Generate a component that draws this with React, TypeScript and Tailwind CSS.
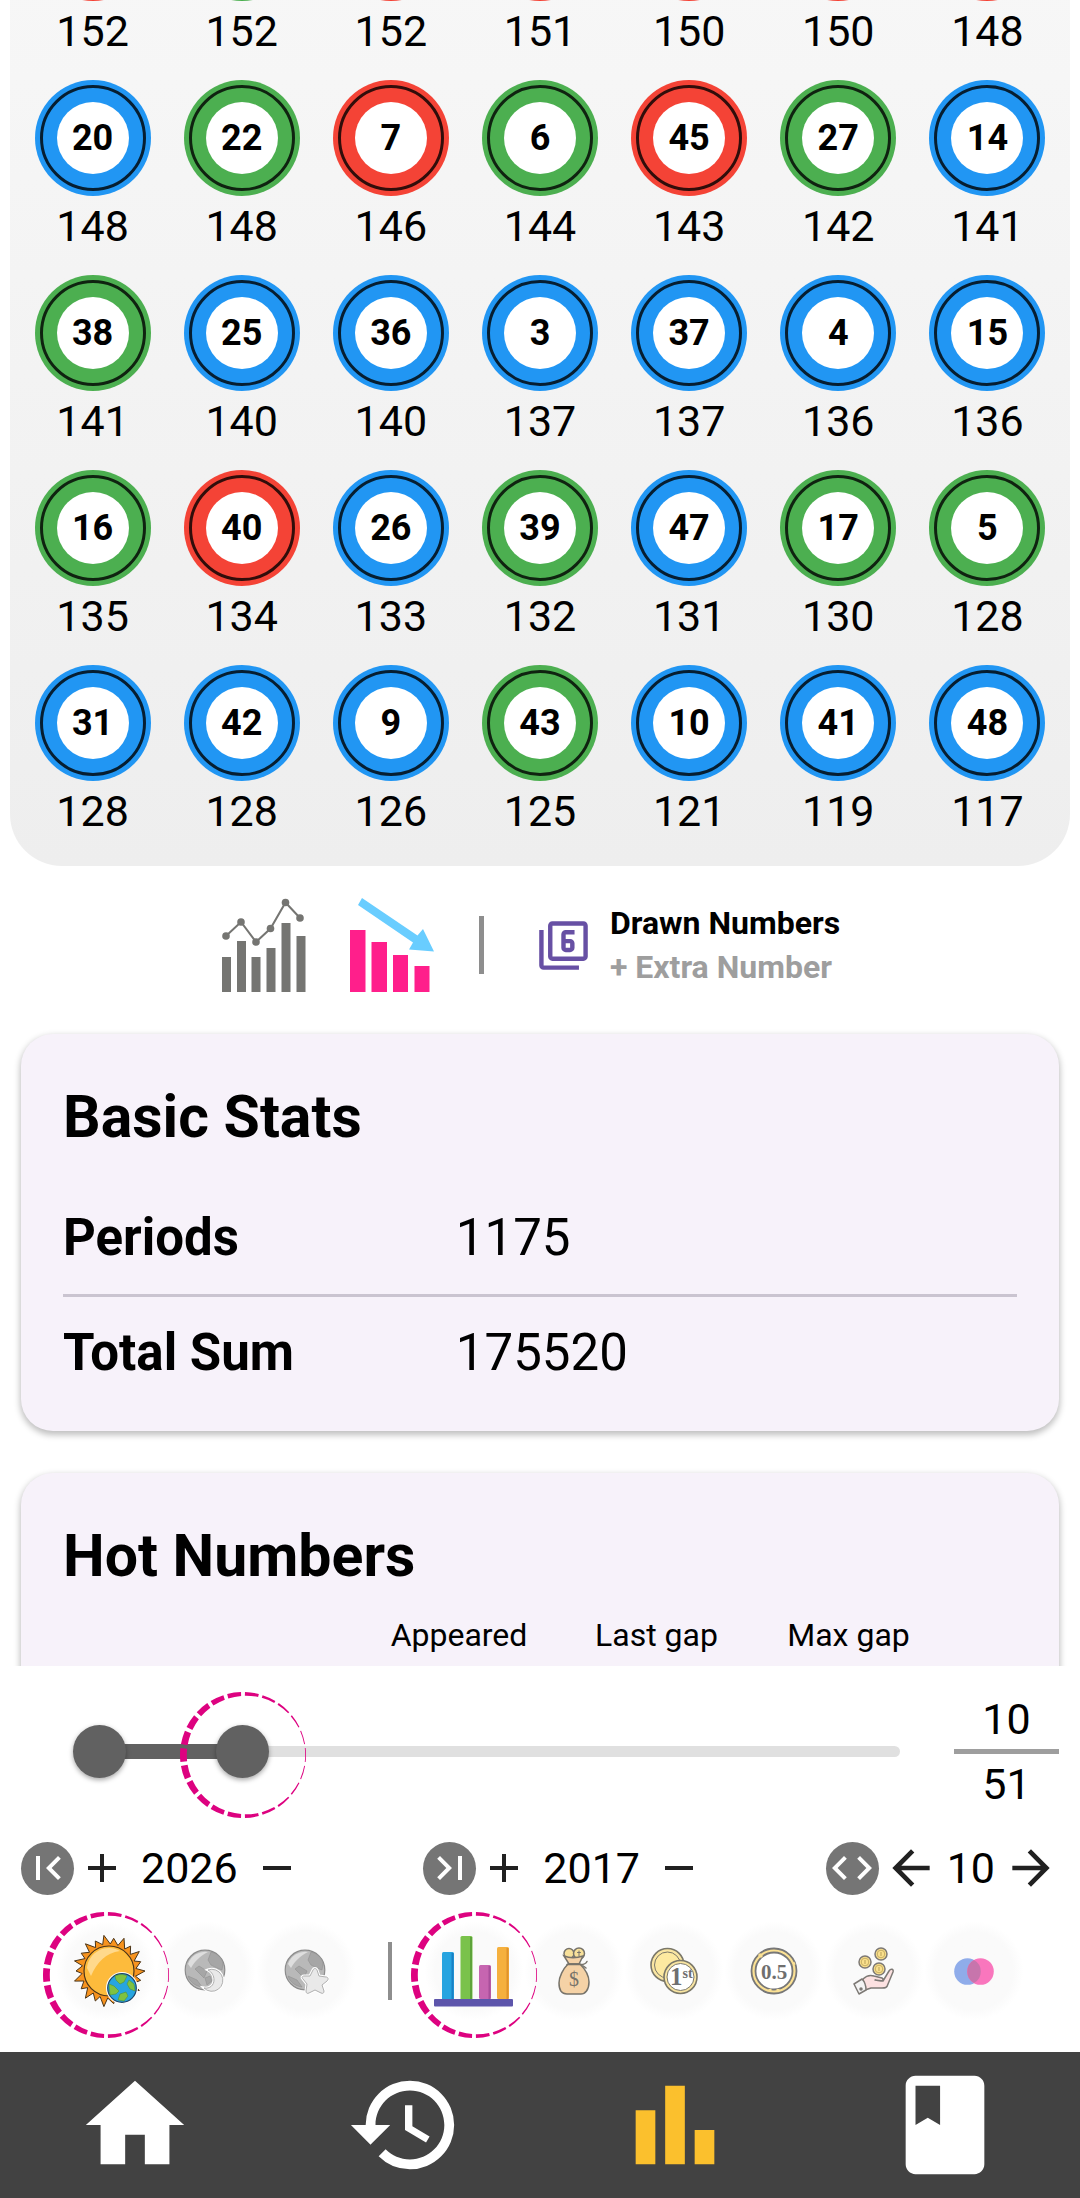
import { useState } from 'react'
import type { ReactNode } from 'react'
import {
  MdAdd,
  MdArrowBack,
  MdArrowForward,
  MdBook,
  MdCode,
  MdFilter6,
  MdFirstPage,
  MdLastPage,
  MdRemove,
} from 'react-icons/md'

type BallColor = 'red' | 'green' | 'blue'
type Ball = [number | null, BallColor, number]

const ballColors: Record<BallColor, string> = {
  red: 'bg-[#f44336]',
  green: 'bg-[#4caf50]',
  blue: 'bg-[#2196f3]',
}

const balls: Ball[] = [
  [null, 'red', 152], [null, 'green', 152], [null, 'red', 152], [null, 'red', 151], [null, 'red', 150], [null, 'red', 150], [null, 'red', 148],
  [20, 'blue', 148], [22, 'green', 148], [7, 'red', 146], [6, 'green', 144], [45, 'red', 143], [27, 'green', 142], [14, 'blue', 141],
  [38, 'green', 141], [25, 'blue', 140], [36, 'blue', 140], [3, 'blue', 137], [37, 'blue', 137], [4, 'blue', 136], [15, 'blue', 136],
  [16, 'green', 135], [40, 'red', 134], [26, 'blue', 133], [39, 'green', 132], [47, 'blue', 131], [17, 'green', 130], [5, 'green', 128],
  [31, 'blue', 128], [42, 'blue', 128], [9, 'blue', 126], [43, 'green', 125], [10, 'blue', 121], [41, 'blue', 119], [48, 'blue', 117],
]

function NumberBall({ value, color }: { value: number | null; color: BallColor }) {
  return (
    <div className={`size-[116px] rounded-full p-[5px] ${ballColors[color]}`}>
      <div className="flex size-full items-center justify-center rounded-full border-[3px] border-black/80">
        <span className="flex size-[72px] items-center justify-center rounded-full bg-white text-[36px] leading-none font-bold">
          {value}
        </span>
      </div>
    </div>
  )
}

function FrequencyGrid() {
  return (
    <section className="mx-[10px] -mt-[115px] grid grid-cols-7 rounded-b-[52px] bg-linear-to-b from-[#f8f8f8] to-[#eeeeee] px-2 pb-[6px]">
      {balls.map(([value, color, count], i) => (
        <div key={i} className="flex h-[195px] flex-col items-center gap-[6px]">
          <NumberBall value={value} color={color} />
          <span className="text-[43px] leading-[48px]">{count}</span>
        </div>
      ))}
    </section>
  )
}

const trendPoints = [[4, 38], [19, 24], [34, 44], [48.5, 30.5], [63.5, 4.5], [78, 20]]
const trendBars = [[0, 59], [15, 43], [29.5, 59], [44.5, 50], [59.5, 25], [74.5, 38]]

function TrendIcon() {
  return (
    <svg className="h-[94px] w-[84px]" viewBox="0 0 84 94" fill="#757572">
      {trendBars.map(([x, y]) => (
        <rect key={x} x={x} y={y} width="9" height={94 - y} />
      ))}
      <polyline points={trendPoints.join(' ')} fill="none" stroke="#757572" strokeWidth="2" />
      {trendPoints.map(([x, y]) => (
        <circle key={x} cx={x} cy={y} r="3.8" />
      ))}
    </svg>
  )
}

function DecreaseIcon() {
  return (
    <svg className="h-[94px] w-[84px]" viewBox="0 0 84 94">
      <path fill="#ff1f8b" d="M0 32h15.500v62H0zM21.500 44h15.500v50h-15.500zM43 57h15v37h-15zM64.500 68h15v26h-15z" />
      <path fill="#69cdff" d="M12 0 67.500 37.500 73 31 84 53.500 59 51.500 63 44.500 8 7z" />
    </svg>
  )
}

function ChartToolbar() {
  return (
    <div className="flex h-[147px] items-center justify-center pr-[18px] pt-[11px]">
      <button type="button" aria-label="Chart">
        <TrendIcon />
      </button>
      <button type="button" aria-label="Sort descending" className="ml-11">
        <DecreaseIcon />
      </button>
      <div className="ml-[45px] h-[58px] w-[5px] bg-[#8e8e8e]" />
      <button type="button" className="ml-[53px] flex items-center gap-5 text-left">
        <MdFilter6 className="size-[53px] text-[#6750a4]" />
        <span className="flex flex-col text-[32px] leading-[44px] font-bold">
          <span>Drawn Numbers</span>
          <span className="text-[#9e9e9e]">+ Extra Number</span>
        </span>
      </button>
    </div>
  )
}

function Card({ title, children }: { title: string; children: ReactNode }) {
  return (
    <section className="m-[21px] rounded-[32px] bg-[#f7f2fa] px-[42px] pt-[50px] pb-[22px] shadow-[0_3px_6px_1px_rgba(0,0,0,0.25)]">
      <h2 className="text-[59px] leading-[66px] font-bold">{title}</h2>
      {children}
    </section>
  )
}

// dashes are thick on the left side and fade to a hairline on the right
const ringDashes = Array.from({ length: 22 }, (_, i) => {
  const middle = Math.PI + (i * 2 * Math.PI) / 22
  const half = (Math.PI / 22) * 0.78
  const width = (angle: number) => 0.8 + ((1 - Math.cos(angle)) / 2) * 6
  const point = (angle: number, inset: number) => {
    const r = 63 - inset
    return `${(63 + r * Math.cos(angle)).toFixed(2)} ${(63 + r * Math.sin(angle)).toFixed(2)}`
  }
  const a = middle - half
  const b = middle + half
  return `M${point(a, 0)}A63 63 0 0 1 ${point(b, 0)}L${point(b, width(b))}A60 60 0 0 0 ${point(a, width(a))}Z`
}).join('')

function ActiveRing() {
  return (
    <svg
      className="pointer-events-none absolute top-1/2 left-1/2 size-[126px] max-w-none -translate-x-1/2 -translate-y-[59px]"
      viewBox="0 0 126 126"
    >
      <path d={ringDashes} fill="#dd0280" />
    </svg>
  )
}

const rangeClass =
  'pointer-events-none absolute inset-0 h-full w-full appearance-none bg-transparent [&::-webkit-slider-thumb]:pointer-events-auto [&::-webkit-slider-thumb]:size-[53px] [&::-webkit-slider-thumb]:appearance-none [&::-webkit-slider-thumb]:rounded-full [&::-webkit-slider-thumb]:bg-[#616161] [&::-webkit-slider-thumb]:shadow-[0_2px_5px_rgba(0,0,0,0.35)]'

function PeriodSlider() {
  const [from, setFrom] = useState(1)
  const [to, setTo] = useState(10)
  const max = 51
  const percent = (value: number) => ((value - 1) / (max - 1)) * 100

  return (
    <div className="flex h-[170px] items-center gap-8 pr-[21px] pl-[73px]">
      <div className="relative h-[53px] flex-1 px-[27px]">
        <div className="relative flex h-full items-center">
          <div className="-mx-[5px] h-[11px] flex-1 rounded-full bg-[#e0e0e0]" />
          <div
            className="absolute h-[15px] bg-[#616161]"
            style={{ left: `${percent(from)}%`, width: `${percent(to) - percent(from)}%` }}
          />
        </div>
        <input
          type="range"
          aria-label="First period"
          min={1}
          max={max}
          value={from}
          onChange={(e) => setFrom(Math.min(Number(e.target.value), to))}
          className={rangeClass}
        />
        <input
          type="range"
          aria-label="Last period"
          min={1}
          max={max}
          value={to}
          onChange={(e) => setTo(Math.max(Number(e.target.value), from))}
          className={rangeClass}
        />
        <div className="pointer-events-none absolute inset-x-[27px] inset-y-0">
          <div className="absolute h-full" style={{ left: `${percent(to)}%` }}>
            <ActiveRing />
          </div>
        </div>
      </div>
      <div className="flex w-[105px] flex-col items-center text-[43px] leading-[60px]">
        <span>{to}</span>
        <div className="h-[5px] w-full bg-[#9e9e9e]" />
        <span>{max}</span>
      </div>
    </div>
  )
}

const roundButton = 'flex size-[53px] items-center justify-center rounded-full bg-[#757575] text-white'

function YearStepper({ icon, label, year }: { icon: ReactNode; label: string; year: number }) {
  return (
    <div className="flex items-center">
      <button type="button" aria-label={label} className={roundButton}>
        {icon}
      </button>
      <button type="button" aria-label="Next year" className="ml-1 text-[#212121]">
        <MdAdd className="size-12" />
      </button>
      <span className="mx-[15px] text-[43px] leading-none">{year}</span>
      <button type="button" aria-label="Previous year" className="text-[#212121]">
        <MdRemove className="size-12" />
      </button>
    </div>
  )
}

function StepperRow() {
  return (
    <div className="flex h-16 items-center justify-between px-[21px]">
      <YearStepper icon={<MdFirstPage className="size-12" />} label="First year" year={2026} />
      <YearStepper icon={<MdLastPage className="size-12" />} label="Last year" year={2017} />
      <div className="flex items-center">
        <button type="button" aria-label="Window size" className={roundButton}>
          <MdCode className="size-12" />
        </button>
        <button type="button" aria-label="Shift back" className="ml-1 text-[#212121]">
          <MdArrowBack className="size-14" />
        </button>
        <span className="mx-2 text-[43px] leading-none">10</span>
        <button type="button" aria-label="Shift forward" className="text-[#212121]">
          <MdArrowForward className="size-14" />
        </button>
      </div>
    </div>
  )
}

const sunRays = Array.from({ length: 44 }, (_, i) => {
  const angle = (i * Math.PI) / 22 + (i % 2 ? 0.05 : 0)
  const r = i % 2 ? 27 : i % 4 ? 33 : 36
  return `${(37 + r * Math.cos(angle)).toFixed(1)},${(37 + r * Math.sin(angle)).toFixed(1)}`
}).join(' ')

function SunIcon() {
  return (
    <svg className="h-[74px] w-20" viewBox="-6 0 80 74">
      <polygon points={sunRays} fill="#f7931e" stroke="#4a3418" strokeWidth="1" />
      <circle cx="37" cy="37" r="25" fill="#fdbb3c" stroke="#4a3418" strokeWidth="1.2" />
      <path d="M15 34a22 22 0 0 1 33-17C34 19 25 28 19 42z" fill="#ffd98c" />
      <circle cx="50" cy="54" r="16" fill="#fff" />
      <circle cx="50" cy="54" r="14.300" fill="#27a5e0" stroke="#1d4468" strokeWidth="1.200" />
      <path d="M43 42c4-2 9-2 12 0l-3 6-4 2-4-4zM57 46l5 4 1 7-5-2-3-5zM37 50l5 2 5 5-3 3-6 1zM48 60l6-2 2 4-4 5-6-1z" fill="#7fc241" stroke="#4c8c2b" strokeWidth=".5" />
    </svg>
  )
}

function GreyGlobe({ children }: { children: ReactNode }) {
  return (
    <svg className="size-[46px]" viewBox="0 0 46 46">
      <circle cx="22" cy="22" r="19.800" fill="#b9b9b9" stroke="#8c8c8c" strokeWidth="1.200" />
      <path d="M5 16A18 18 0 0 1 25 4C17 8 12 13 8 20z" fill="#dedede" />
      <path d="M28 4c6 1 11 6 12 11l-1 7-5-2-6-3-3-5zM16 18l8 5-3 7-9-9zM5 28l9 4 5 7c-7-1-12-5-14-11zM22 30l5-2 2 5-5 4z" fill="#a6a6a6" stroke="#919191" strokeWidth=".6" />
      {children}
    </svg>
  )
}

const moonPath = 'M25 22a11 11 0 1 1-4 18c6 1 10-3 10-8 0-4-2-8-6-10z'
const starPath = 'M30 22c1-2 3-2 4 0l2 6 7 1c2 0 3 2 1 4l-5 4 2 6c0 2-1 3-3 2l-6-3-6 3c-2 1-3 0-3-2l1-7-4-5c-2-2 0-3 1-3l6 0z'

function MoonGlobeIcon() {
  return (
    <GreyGlobe>
      <path d={moonPath} fill="#e9e9e9" stroke="#fff" strokeWidth="3" />
      <path d={moonPath} fill="#e9e9e9" stroke="#b0b0b0" strokeWidth="1" />
    </GreyGlobe>
  )
}

function StarGlobeIcon() {
  return (
    <GreyGlobe>
      <path d={starPath} fill="#e9e9e9" stroke="#fff" strokeWidth="3" />
      <path d={starPath} fill="#e9e9e9" stroke="#b0b0b0" strokeWidth="1" />
    </GreyGlobe>
  )
}

function BarsIcon() {
  return (
    <svg className="h-[72px] w-20" viewBox="0 0 80 72">
      <rect x="8" y="17" width="12" height="48" rx="1.500" fill="#27a4e0" />
      <rect x="26.500" y="1" width="12" height="64" rx="1.500" fill="#7ac24b" />
      <rect x="45" y="30" width="12" height="34" rx="1.500" fill="#c665b0" />
      <rect x="63" y="12" width="12" height="52" rx="1.500" fill="#f5b03e" />
      <path d="M17.500 18h2v46h-2z" fill="#1a80c4" />
      <path d="M36 2h2v62h-2z" fill="#5da33a" />
      <path d="M54.500 31h2v33h-2z" fill="#a84f9b" />
      <path d="M72.500 13h2v51h-2z" fill="#e0932b" />
      <rect y="64" width="79" height="7.500" rx="1" fill="#5d55ab" />
    </svg>
  )
}

function MoneyBagIcon() {
  return (
    <svg className="h-[48px] w-8" viewBox="0 0 32 48" stroke="#77736a" strokeWidth="1.500" strokeLinecap="round">
      <circle cx="11" cy="6.500" r="5" fill="#f7e09a" />
      <circle cx="21" cy="6.500" r="5.500" fill="#f7e09a" />
      <path d="M21 4v5M19.500 5.500h3" strokeWidth="1" />
      <path d="M6 9c5 2 13 2 19 0l-4 8H11z" fill="#f5d2a6" />
      <path d="M10 17h12c5 5 9 12 9 18 0 8-4 12-8 12H9c-5 0-8-4-8-11 0-6 4-14 9-19z" fill="#f5d2a6" />
      <path d="M9 17.500h14c3 0 5-1 6-3M24 18l4 3" fill="none" />
      <text x="16" y="39" textAnchor="middle" fontFamily="Liberation Serif, serif" fontSize="20" fill="#77736a" stroke="none">
        $
      </text>
    </svg>
  )
}

function FirstPrizeIcon() {
  return (
    <svg className="size-12" viewBox="0 0 48 48" stroke="#7b7869" strokeWidth="1.600">
      <circle cx="17.500" cy="18" r="16.500" fill="#fae6a2" />
      <circle cx="17.500" cy="18" r="13" fill="#fde9a0" strokeWidth="1" />
      <circle cx="30.500" cy="30" r="16.500" fill="#fae6a2" />
      <circle cx="30.500" cy="30" r="13.500" fill="#fff" strokeWidth="1" />
      <text x="20" y="38" fontFamily="Liberation Serif, serif" fontWeight="bold" fontSize="25" fill="#6f6f6f" stroke="none">
        1<tspan dy="-7" fontSize="14">st</tspan>
      </text>
    </svg>
  )
}

function HalfIcon() {
  return (
    <svg className="size-12" viewBox="0 0 48 48" stroke="#777" strokeWidth="1.800">
      <circle cx="24" cy="24" r="22.500" fill="#fbe194" />
      <circle cx="24" cy="24" r="18.500" fill="#fff" />
      <path d="M9 7 12 10M43 17l2-1M20 42v2M28 42v2" stroke="#fbe194" strokeWidth="3" />
      <text x="24" y="32" textAnchor="middle" fontFamily="Liberation Serif, serif" fontWeight="bold" fontSize="21" fill="#6f6f6f" stroke="none">
        0.5
      </text>
    </svg>
  )
}

function HandCoinsIcon() {
  return (
    <svg className="h-12 w-[42px]" viewBox="0 0 42 48" fill="none" stroke="#7d7975" strokeWidth="1.500" strokeLinejoin="round">
      {[[12, 15], [28, 7], [26, 22]].map(([x, y]) => (
        <g key={x}>
          <circle cx={x} cy={y} r="6" fill="#fae08c" />
          <circle cx={x} cy={y} r="3.800" stroke="#b9a15c" strokeWidth=".8" />
          <path d={`M${x} ${y - 2}v4`} stroke="#b9a15c" strokeWidth="1" />
        </g>
      ))}
      <path d="M10 32c4-4 8-4 11-3l8 2c2 1 1 3-1 3l-6-1 8 1 6-10c2-3 5-2 4 1l-5 12c-1 4-3 4-6 4l-11 0-6 2z" fill="#fce1e1" />
      <path d="M1 37l8-5c3 3 4 7 4 11l-7 4z" fill="#f4f4f4" />
      <circle cx="8" cy="42" r="1" fill="#7d7975" />
    </svg>
  )
}

function OverlapIcon() {
  return (
    <svg className="h-[27px] w-10" viewBox="0 0 40 27">
      <circle cx="13.500" cy="13.500" r="13.300" fill="#8facea" />
      <circle cx="26.500" cy="13.500" r="13.300" fill="#f976bd" />
      <path d="M20 1.900a13.300 13.300 0 0 1 0 23.200 13.300 13.300 0 0 1 0-23.200z" fill="#c775ac" />
    </svg>
  )
}

const drawTimes = [
  { label: 'All draws', icon: <SunIcon /> },
  { label: 'Night draws', icon: <MoonGlobeIcon /> },
  { label: 'Star draws', icon: <StarGlobeIcon /> },
]

const statViews = [
  { label: 'Frequency', icon: <BarsIcon /> },
  { label: 'Jackpot', icon: <MoneyBagIcon /> },
  { label: 'First prize', icon: <FirstPrizeIcon /> },
  { label: 'Half', icon: <HalfIcon /> },
  { label: 'Payout', icon: <HandCoinsIcon /> },
  { label: 'Overlap', icon: <OverlapIcon /> },
]

function IconTabs({ items }: { items: { label: string; icon: ReactNode }[] }) {
  const [active, setActive] = useState(0)

  return (
    <div className="flex">
      {items.map((item, i) => (
        <button
          key={item.label}
          type="button"
          aria-label={item.label}
          aria-pressed={i === active}
          onClick={() => setActive(i)}
          className={`relative flex size-[100px] items-center justify-center rounded-full bg-radial from-[#fafafa] from-55% to-transparent to-70% ${i === active ? 'z-10' : ''}`}
        >
          {item.icon}
          {i === active && <ActiveRing />}
        </button>
      ))}
    </div>
  )
}

function HomeIcon() {
  return <path d="M10 20v-6h4v6h5v-8h3L12 3 2 12h3v8z" />
}

function HistoryIcon() {
  return (
    <path d="M13 3a9 9 0 0 0-9 9H1l3.890 3.890.070.140L9 12H6c0-3.870 3.130-7 7-7s7 3.130 7 7-3.130 7-7 7c-1.930 0-3.680-.790-4.940-2.060l-1.420 1.420A8.954 8.954 0 0 0 13 21a9 9 0 0 0 0-18zm-1 5v5l4.280 2.540.720-1.210-3.500-2.080V8H12z" />
  )
}

function BottomNav() {
  return (
    <nav className="grid h-[146px] grid-cols-4 items-center justify-items-center bg-[#424242] text-white">
      <a href="#home" aria-label="Home">
        <svg className="size-[118px]" viewBox="0 0 24 24" fill="currentColor">
          <HomeIcon />
        </svg>
      </a>
      <a href="#history" aria-label="History">
        <svg className="size-[118px]" viewBox="0 0 24 24" fill="currentColor">
          <HistoryIcon />
        </svg>
      </a>
      <a href="#stats" aria-label="Statistics" aria-current="page" className="text-[#fbc02d]">
        <svg className="size-[118px]" viewBox="0 0 24 24" fill="currentColor">
          <path d="M4 9h4v11H4zM10 4h4v16h-4zM16 13h4v7h-4z" />
        </svg>
      </a>
      <a href="#book" aria-label="Book">
        <MdBook className="size-[118px]" />
      </a>
    </nav>
  )
}

const basicStats = [
  ['Periods', '1175'],
  ['Total Sum', '175520'],
]

export default function App() {
  return (
    <div className="flex h-screen flex-col bg-white font-[Roboto,sans-serif] text-black">
      <main className="flex min-h-0 flex-1 flex-col overflow-hidden *:shrink-0">
        <FrequencyGrid />
        <ChartToolbar />
        <Card title="Basic Stats">
          <dl className="mt-8 divide-y-[3px] divide-[#cac4d0] text-[51px] leading-[60px]">
            {basicStats.map(([label, value]) => (
              <div key={label} className="grid grid-cols-[7fr_10fr] py-[26px]">
                <dt className="font-bold">{label}</dt>
                <dd>{value}</dd>
              </div>
            ))}
          </dl>
        </Card>
        <Card title="Hot Numbers">
          <table className="mt-[26px] mb-20 ml-[300px] text-[32px] leading-10">
            <thead>
              <tr>
                <th className="w-[192px] text-center font-normal">Appeared</th>
                <th className="w-[203px] text-center font-normal">Last gap</th>
                <th className="w-[181px] text-center font-normal">Max gap</th>
              </tr>
            </thead>
          </table>
        </Card>
      </main>
      <footer>
        <PeriodSlider />
        <StepperRow />
        <div className="flex h-[152px] items-center gap-8 px-14 pb-[10px]">
          <IconTabs items={drawTimes} />
          <div className="h-[58px] w-[5px] bg-[#8e8e8e]" />
          <IconTabs items={statViews} />
        </div>
        <BottomNav />
      </footer>
    </div>
  )
}
